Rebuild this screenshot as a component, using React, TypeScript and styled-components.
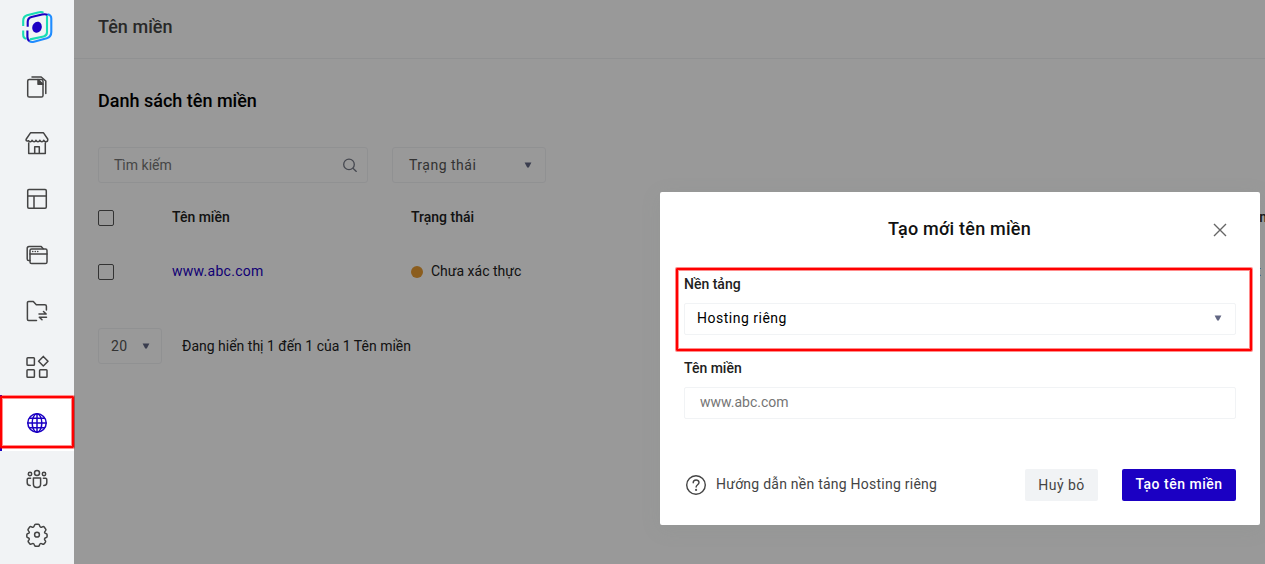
import React from "react";
import styled, { createGlobalStyle, css } from "styled-components";

const GlobalStyle = createGlobalStyle`
  *, *::before, *::after { box-sizing: border-box; }
  body {
    margin: 0;
    overflow: hidden;
    background: #fff;
    font-family: Roboto, "Liberation Sans", sans-serif;
    font-size: 14px;
    line-height: 20px;
    color: #212121;
  }
  button { font: inherit; }
`;

const Page = styled.div`
  display: flex;
  height: 564px;
  overflow: hidden;
`;

const Sidebar = styled.nav`
  display: flex;
  flex-direction: column;
  flex: 0 0 74px;
  background: #f1f3f5;
`;

const Logo = styled.div`
  display: flex;
  justify-content: center;
  height: 59px;
  padding-top: 10px;
`;

const NavItem = styled.a<{ $active?: boolean }>`
  position: relative;
  display: flex;
  flex: 0 0 56px;
  align-items: center;
  justify-content: center;
  color: #444;
  ${(p) =>
    p.$active &&
    css`
      background: #fff;
      color: #1b00c3;
      box-shadow: inset 2px 0 #1b00c3;
    `}
`;

const redFrame = css`
  position: absolute;
  border: 2px solid #f00;
  border-radius: 1px;
  box-shadow: 0 0 0 1px rgba(255, 0, 0, 0.45), inset 0 0 0 1px rgba(255, 0, 0, 0.45);
`;

const NavMark = styled.span`
  ${redFrame}
  inset: 1px 0 3px;
`;

const Main = styled.main`
  position: relative;
  flex: 1;
  min-width: 0;
  overflow: hidden;
`;

const Header = styled.header`
  display: flex;
  align-items: center;
  height: 59px;
  padding: 0 24px 5px;
  border-bottom: 1px solid #f1f2f4;
  font-size: 18px;
  font-weight: 500;
  letter-spacing: 0.05px;
  color: #444;
`;

const Content = styled.section`
  padding: 30px 0 0 24px;
`;

const Title = styled.h1`
  margin: 0;
  font-size: 18px;
  line-height: 24px;
  font-weight: 500;
  color: #000;
`;

const Filters = styled.div`
  display: flex;
  gap: 24px;
  margin-top: 34px;
`;

const Box = styled.div<{ $width: number; $inset: number; $end?: number }>`
  display: flex;
  align-items: center;
  justify-content: space-between;
  width: ${(p) => p.$width}px;
  height: 36px;
  padding: 0 ${(p) => p.$end ?? 13}px 0 ${(p) => p.$inset}px;
  border: 1px solid #f1f2f4;
  border-radius: 3px;
  color: #555;
`;

const SearchText = styled.span`
  color: #757575;
`;

const Row = styled.div<{ $head?: boolean }>`
  display: grid;
  grid-template-columns: 74px 239px 804px auto;
  align-items: center;
  height: 54px;
  white-space: nowrap;
  font-weight: ${(p) => (p.$head ? 500 : 400)};
`;

const Table = styled.div`
  margin-top: 7px;
`;

const LastHead = styled.span`
  padding-left: 17px;
`;

const Check = styled.span`
  width: 16px;
  height: 16px;
  margin-top: 2px;
  border: 1px solid #555;
  border-radius: 2px;
`;

const DomainLink = styled.a`
  letter-spacing: 0.28px;
  color: #1b00c3;
`;

const DetailLink = styled.a`
  letter-spacing: 0.3px;
  color: #212121;
`;

const Status = styled.span`
  display: flex;
  align-items: center;
  gap: 8px;
  &::before {
    content: "";
    width: 12px;
    height: 12px;
    margin-top: 2px;
    border-radius: 50%;
    background: #e89c32;
  }
`;

const Pager = styled.div`
  display: flex;
  align-items: center;
  gap: 20px;
  margin-top: 30px;
`;

const Overlay = styled.div`
  position: absolute;
  inset: 0;
  background: rgba(0, 0, 0, 0.4);
`;

const Dialog = styled.div`
  position: absolute;
  top: 192px;
  right: 5px;
  width: 600px;
  height: 333px;
  padding: 24px;
  border-radius: 2px;
  background: #fff;
  box-shadow: 0 4px 20px rgba(120, 135, 130, 0.14);
`;

const DialogHeader = styled.div`
  display: flex;
  align-items: center;
  height: 26px;
`;

const DialogTitle = styled.h2`
  flex: 1;
  margin: 0;
  padding-left: 31px;
  font-size: 18px;
  line-height: 24px;
  font-weight: 500;
  letter-spacing: 0.22px;
  text-align: center;
  color: #111;
`;

const Close = styled.button`
  display: flex;
  width: 32px;
  padding: 2px 0 0 9px;
  border: 0;
  background: none;
  color: #666;
`;

const Field = styled.div<{ $first?: boolean }>`
  position: relative;
  margin-top: ${(p) => (p.$first ? 32 : 23)}px;
`;

const FieldMark = styled.span`
  ${redFrame}
  inset: -6px -16px -16px -8px;
`;

const Label = styled.div`
  font-weight: 500;
  line-height: 20px;
`;

const Control = styled.div<{ $placeholder?: boolean }>`
  display: flex;
  align-items: center;
  justify-content: space-between;
  height: 32px;
  margin-top: 9px;
  padding: 0 13px 2px ${(p) => (p.$placeholder ? 15 : 12)}px;
  border: 1px solid #f1f3f5;
  border-radius: 2px;
  color: ${(p) => (p.$placeholder ? "#757575" : "#000")};
`;

const Footer = styled.div`
  display: flex;
  align-items: center;
  margin-top: 50px;
`;

const Guide = styled.a`
  display: flex;
  flex: 1;
  align-items: center;
  gap: 9px;
  padding-left: 1px;
  color: #444;
`;

const GuideText = styled.span`
  padding-bottom: 2px;
  letter-spacing: 0.24px;
`;

const Button = styled.button<{ $primary?: boolean }>`
  width: ${(p) => (p.$primary ? 114 : 73)}px;
  height: 32px;
  margin-left: ${(p) => (p.$primary ? 24 : 0)}px;
  padding: ${(p) => (p.$primary ? "0 0 2px" : "0")};
  border: 0;
  border-radius: 2px;
  background: ${(p) => (p.$primary ? "#1b00c3" : "#f1f3f5")};
  color: ${(p) => (p.$primary ? "#fff" : "#444")};
  font-weight: ${(p) => (p.$primary ? 500 : 400)};
  letter-spacing: ${(p) => (p.$primary ? 0.5 : 0.45)}px;
`;

const SelectValue = styled.span`
  letter-spacing: 0.5px;
`;

const Icon = ({ children }: { children: React.ReactNode }) => (
  <svg width="24" height="24" viewBox="0 0 24 24" fill="none" stroke="currentColor" strokeWidth="1.5" strokeLinecap="round" strokeLinejoin="round">
    {children}
  </svg>
);

const Caret = () => (
  <svg width="8" height="6" viewBox="0 0 8 6">
    <path d="M.6.6h6.8L4.8 5.6H3.2z" fill="#626783" />
  </svg>
);

const icons = {
  pages: (
    <>
      <rect x="2.7" y="4.5" width="15.3" height="17.5" rx="1.6" />
      <path d="M7 2h9.2L20.8 6v12.5" />
      <path d="M13 4.5v4.8h5z" fill="currentColor" />
    </>
  ),
  store: (
    <path d="M5.5 1.8h13L22.7 8c.6 3.3-3 3.6-3.9 1.2-.7 2.1-3.2 2.1-3.9 0-.7 2-3.2 2-3.9 0-.7 2-3 2-3.9 0-.8 2-2.6 2-3.3.5C2.5 10.6.5 9.8 1.3 8zM3.7 12v10.4h16.6V12M9.7 22.2v-6.4h4.6v6.4" />
  ),
  layout: (
    <>
      <rect x="2.7" y="2.6" width="18.6" height="18.7" rx="1.2" />
      <path d="M2.7 9h18.6M9 9v12.3" />
    </>
  ),
  windows: (
    <>
      <path d="M5 17.5H3.8a1.6 1.6 0 0 1-1.6-1.6V5.4a1.8 1.8 0 0 1 1.8-1.8h12.2l2 2.2" />
      <rect x="5" y="6" width="17" height="14.5" rx="1.6" />
      <path d="M5 11h17M7.7 8.5h.1M10.2 8.5h.1M12.7 8.5h.1" />
    </>
  ),
  folder: (
    <path d="M11.5 21.5H3.6a1.2 1.2 0 0 1-1.2-1.2V3.7a1.2 1.2 0 0 1 1.2-1.2h4.7l3 3.2h8.5a1.6 1.6 0 0 1 1.6 1.6v3.6M14 15h7.2l-2.7-2.5M21.5 18.2h-7.2l2.7 2.6" />
  ),
  apps: (
    <>
      <rect x="2" y="2.8" width="7.4" height="7.4" rx=".8" />
      <rect x="2" y="14.8" width="7.4" height="7.4" rx=".8" />
      <rect x="14.6" y="14.8" width="7.4" height="7.4" rx=".8" />
      <path d="m18.3 1.4 4.7 4.8-4.7 4.8-4.7-4.8z" />
    </>
  ),
  globe: (
    <>
      <circle cx="12" cy="12" r="9.2" />
      <ellipse cx="12" cy="12" rx="4.8" ry="9.2" />
      <path d="M12 2.8v18.4M2.8 12h18.4M4.6 7.2h14.8M4.6 16.8h14.8" />
    </>
  ),
  people: (
    <>
      <circle cx="12" cy="6" r="2.5" />
      <circle cx="5" cy="7" r="1.7" />
      <circle cx="19" cy="7" r="1.7" />
      <path d="M8.4 11h7.2v6c0 4.6-7.2 4.6-7.2 0zM5.6 11.2H3.4c-.7 0-1.2.5-1.2 1.2v3.2c0 2 1.2 3 3 3M18.4 11.2h2.2c.7 0 1.2.5 1.2 1.2v3.2c0 2-1.2 3-3 3" />
    </>
  ),
  gear: (
    <g transform="translate(0 -.5)">
      <circle cx="12" cy="12.2" r="2.4" />
      <path d="M9.4 3.2c.2-.9.6-1.4 1.3-1.4h2.6c.7 0 1.1.5 1.3 1.4.3 1.5 1.4 2 2.7 1.2.8-.5 1.4-.5 1.9.1l1.5 2.2c.4.6.2 1.2-.4 1.8-1.1 1-.9 2.3.6 2.6.8.2 1.2.5 1.2 1.1v1.9c0 .7-.5 1-1.3 1.2-1.4.4-1.7 1.5-.7 2.6.6.7.7 1.2.3 1.8l-1.4 1.7c-.5.5-1.1.5-1.8 0-1.4-.8-2.5-.3-2.7 1.1-.2.9-.6 1.3-1.3 1.3h-2.4c-.7 0-1.2-.5-1.4-1.3-.3-1.4-1.4-1.9-2.7-1.1-.8.5-1.3.5-1.8 0l-1.5-1.8c-.4-.6-.3-1.1.3-1.8 1-1 .7-2.1-.7-2.5-.8-.2-1.2-.6-1.2-1.2v-1.9c0-.6.4-.9 1.2-1.1 1.5-.3 1.7-1.6.6-2.6-.6-.6-.8-1.2-.4-1.8l1.5-2.2c.5-.6 1.1-.6 1.9-.1 1.3.8 2.4.3 2.7-1.2z" />
    </g>
  ),
};

export default function App() {
  return (
    <Page>
      <GlobalStyle />
      <Sidebar>
        <Logo>
          <svg width="32" height="34" viewBox="0 0 32 34" fill="none" strokeWidth="2.1">
            <path d="M2.2 16v-5Q2.2 6.3 6 5.2L17 2.4Q21 1.4 22.4 2.8M2.2 20.5v4q0 4 3.2 4.3" stroke="#18dcb4" />
            <path d="M26.4 4.2Q30.3 4.8 30.3 8.6V22q0 4.8-4.6 6.2L13 31.7q-3 .8-4.6-.6" stroke="#1f8cff" />
            <path d="M26 5.2v17q0 3.4-3.4 4.2L9 29.4" stroke="#18dcb4" />
            <path d="M8.6 31Q6.4 30 6.4 26.5V20.4M6.7 16.8V12q0-4 3.8-5L21 4.6q3.6-.8 5.4.4" stroke="#1b00c3" />
            <ellipse cx="16" cy="17.2" rx="4.7" ry="5.6" fill="#1b00c3" transform="rotate(18 16 17.2)" />
          </svg>
        </Logo>
        {Object.entries(icons).map(([name, shape]) => (
          <NavItem key={name} $active={name === "globe"}>
            <Icon>{shape}</Icon>
            {name === "globe" && <NavMark />}
          </NavItem>
        ))}
      </Sidebar>
      <Main>
        <Header>Tên miền</Header>
        <Content>
          <Title>Danh sách tên miền</Title>
          <Filters>
            <Box $width={270} $inset={15} $end={10}>
              <SearchText>Tìm kiếm</SearchText>
              <svg width="14" height="14" viewBox="0 0 14 14" fill="none" stroke="#747885" strokeWidth="1.3">
                <circle cx="6" cy="6.4" r="5.3" />
                <path d="m10 10.2 3.6 3.6" />
              </svg>
            </Box>
            <Box $width={154} $inset={16}>
              <SelectValue>Trạng thái</SelectValue>
              <Caret />
            </Box>
          </Filters>
          <Table>
            <Row $head>
              <Check />
              <span>Tên miền</span>
              <span>Trạng thái</span>
              <LastHead>Xác minh</LastHead>
            </Row>
            <Row>
              <Check />
              <DomainLink>www.abc.com</DomainLink>
              <Status>Chưa xác thực</Status>
              <DetailLink>Chi tiết</DetailLink>
            </Row>
          </Table>
          <Pager>
            <Box $width={64} $inset={12} $end={11}>
              <SelectValue>20</SelectValue>
              <Caret />
            </Box>
            <span>Đang hiển thị 1 đến 1 của 1 Tên miền</span>
          </Pager>
        </Content>
        <Overlay />
        <Dialog role="dialog">
          <DialogHeader>
            <DialogTitle>Tạo mới tên miền</DialogTitle>
            <Close aria-label="Đóng">
              <svg width="14" height="14" viewBox="0 0 14 14" stroke="currentColor" strokeWidth="1.4">
                <path d="m1 1 12 12M13 1 1 13" />
              </svg>
            </Close>
          </DialogHeader>
          <Field $first>
            <Label>Nền tảng</Label>
            <Control>
              <SelectValue>Hosting riêng</SelectValue>
              <Caret />
            </Control>
            <FieldMark />
          </Field>
          <Field>
            <Label>Tên miền</Label>
            <Control $placeholder>www.abc.com</Control>
          </Field>
          <Footer>
            <Guide>
              <svg width="22" height="22" viewBox="0 0 22 22" fill="none" stroke="currentColor" strokeWidth="1.4" strokeLinecap="round">
                <circle cx="11" cy="11" r="9.3" />
                <path d="M8.2 8.8c0-3.9 5.8-3.7 5.8-.2 0 2.2-2.9 2.1-2.9 4.5" />
                <circle cx="11.1" cy="15.9" r=".4" fill="currentColor" />
              </svg>
              <GuideText>Hướng dẫn nền tảng Hosting riêng</GuideText>
            </Guide>
            <Button>Huỷ bỏ</Button>
            <Button $primary>Tạo tên miền</Button>
          </Footer>
        </Dialog>
      </Main>
    </Page>
  );
}
